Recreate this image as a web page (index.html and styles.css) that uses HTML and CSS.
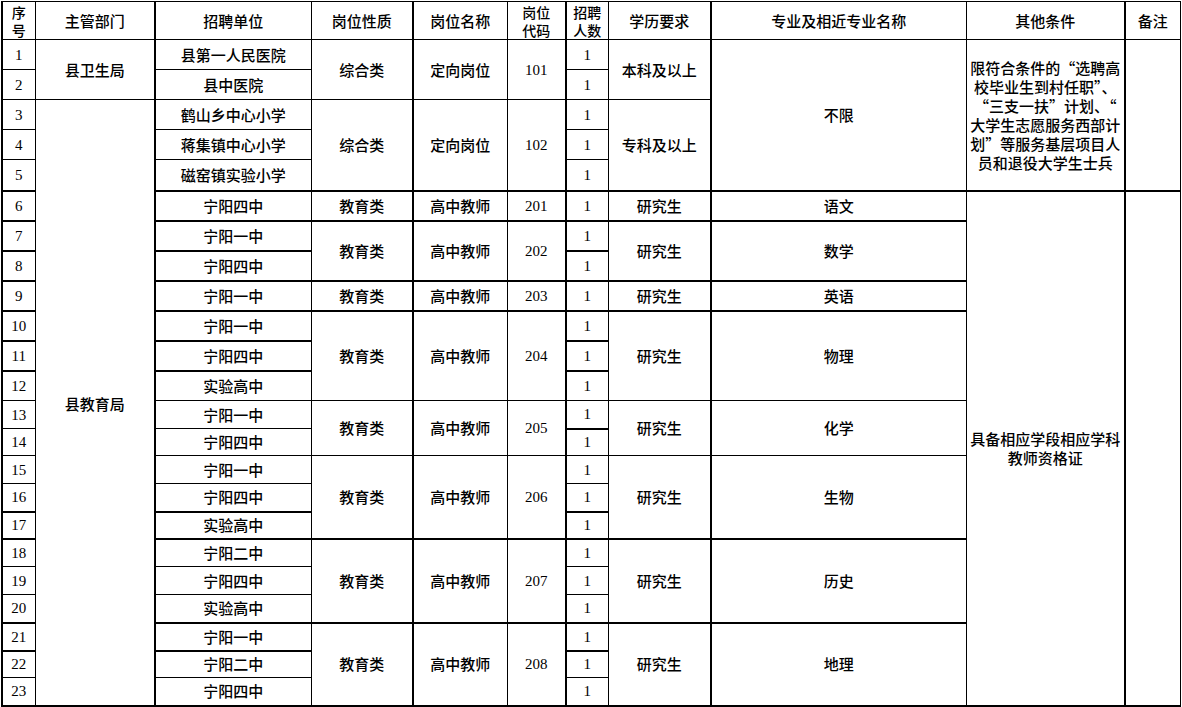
FILE: index.html
```html
<!DOCTYPE html>
<html lang="zh">
<head>
<meta charset="utf-8">
<title>招聘岗位一览表</title>
<link rel="stylesheet" href="styles.css">
</head>
<body>
<table class="jobs">
<colgroup>
<col class="c1"><col class="c2"><col class="c3 tl"><col class="c4"><col class="c5 tl"><col class="c6"><col class="c7 tl"><col class="c8"><col class="c9 tl"><col class="c10"><col class="c11 tl">
</colgroup>
<thead>
<tr class="r38">
<th class="two">序<br>号</th><th>主管部门</th><th>招聘单位</th><th>岗位性质</th><th>岗位名称</th><th class="two">岗位<br>代码</th><th class="two">招聘<br>人数</th><th>学历要求</th><th>专业及相近专业名称</th><th>其他条件</th><th>备注</th>
</tr>
</thead>
<tbody>
<tr class="r30">
<td class="num">1</td><td rowspan="2">县卫生局</td><td>县第一人民医院</td><td rowspan="2">综合类</td><td rowspan="2">定向岗位</td><td rowspan="2" class="num">101</td><td class="num">1</td><td rowspan="2">本科及以上</td><td rowspan="5">不限</td><td rowspan="5" class="cond">限符合条件的“选聘高<br>校毕业生到村任职”、<br>“三支一扶”计划、“<br>大学生志愿服务西部计<br>划”等服务基层项目人<br>员和退役大学生士兵</td><td rowspan="5"></td>
</tr>
<tr class="r30">
<td class="num">2</td><td>县中医院</td><td class="num">1</td>
</tr>
<tr class="r30">
<td class="num">3</td><td rowspan="21" class="dept">县教育局</td><td>鹤山乡中心小学</td><td rowspan="3">综合类</td><td rowspan="3">定向岗位</td><td rowspan="3" class="num">102</td><td class="num">1</td><td rowspan="3">专科及以上</td>
</tr>
<tr class="r30">
<td class="num">4</td><td>蒋集镇中心小学</td><td class="num">1</td>
</tr>
<tr class="r31">
<td class="num">5</td><td>磁窑镇实验小学</td><td class="num">1</td>
</tr>
<tr class="r30 tk">
<td class="num">6</td><td>宁阳四中</td><td>教育类</td><td>高中教师</td><td class="num">201</td><td class="num">1</td><td>研究生</td><td>语文</td><td rowspan="18" class="cert">具备相应学段相应学科<br>教师资格证</td><td rowspan="18"></td>
</tr>
<tr class="r30 tk">
<td class="num">7</td><td>宁阳一中</td><td rowspan="2">教育类</td><td rowspan="2">高中教师</td><td rowspan="2" class="num">202</td><td class="num">1</td><td rowspan="2">研究生</td><td rowspan="2">数学</td>
</tr>
<tr class="r30 tk">
<td class="num">8</td><td>宁阳四中</td><td class="num">1</td>
</tr>
<tr class="r30 tk">
<td class="num">9</td><td>宁阳一中</td><td>教育类</td><td>高中教师</td><td class="num">203</td><td class="num">1</td><td>研究生</td><td>英语</td>
</tr>
<tr class="r30 tk">
<td class="num">10</td><td>宁阳一中</td><td rowspan="3">教育类</td><td rowspan="3">高中教师</td><td rowspan="3" class="num">204</td><td class="num">1</td><td rowspan="3">研究生</td><td rowspan="3">物理</td>
</tr>
<tr class="r30 tk">
<td class="num">11</td><td>宁阳四中</td><td class="num">1</td>
</tr>
<tr class="r30 tk">
<td class="num">12</td><td>实验高中</td><td class="num">1</td>
</tr>
<tr class="r28">
<td class="num">13</td><td>宁阳一中</td><td rowspan="2">教育类</td><td rowspan="2">高中教师</td><td rowspan="2" class="num">205</td><td class="num">1</td><td rowspan="2">研究生</td><td rowspan="2">化学</td>
</tr>
<tr class="r27">
<td class="num">14</td><td>宁阳四中</td><td class="num tt">1</td>
</tr>
<tr class="r28">
<td class="num">15</td><td>宁阳一中</td><td rowspan="3">教育类</td><td rowspan="3">高中教师</td><td rowspan="3" class="num">206</td><td class="num">1</td><td rowspan="3">研究生</td><td rowspan="3">生物</td>
</tr>
<tr class="r28">
<td class="num">16</td><td>宁阳四中</td><td class="num">1</td>
</tr>
<tr class="r27 tk">
<td class="num">17</td><td>实验高中</td><td class="num">1</td>
</tr>
<tr class="r28 tk">
<td class="num">18</td><td>宁阳二中</td><td rowspan="3">教育类</td><td rowspan="3">高中教师</td><td rowspan="3" class="num">207</td><td class="num">1</td><td rowspan="3">研究生</td><td rowspan="3">历史</td>
</tr>
<tr class="r28">
<td class="num">19</td><td>宁阳四中</td><td class="num">1</td>
</tr>
<tr class="r28">
<td class="num">20</td><td>实验高中</td><td class="num">1</td>
</tr>
<tr class="r28 tk">
<td class="num">21</td><td>宁阳一中</td><td rowspan="3">教育类</td><td rowspan="3">高中教师</td><td rowspan="3" class="num">208</td><td class="num">1</td><td rowspan="3">研究生</td><td rowspan="3">地理</td>
</tr>
<tr class="r27 tk">
<td class="num">22</td><td>宁阳二中</td><td class="num">1</td>
</tr>
<tr class="r28">
<td class="num">23</td><td>宁阳四中</td><td class="num">1</td>
</tr>
</tbody>
</table>
</body>
</html>
```

FILE: styles.css
```css
html, body {
  margin: 0;
  padding: 0;
  background: #fff;
}

body {
  padding: 1px 0 0 1px;
}

.jobs {
  border-collapse: collapse;
  table-layout: fixed;
  width: 1179px;
  font-family: "Noto Sans CJK SC", "Liberation Serif", sans-serif;
  font-size: 15px;
  color: #000;
  border: 2px solid #000;
  border-top-width: 1px;
  border-right-width: 1px;
}

.c1 { width: 33px; }
.c2 { width: 120px; }
.c3 { width: 156px; }
.c4 { width: 102px; }
.c5 { width: 94px; }
.c6 { width: 59px; }
.c7 { width: 42px; }
.c8 { width: 103px; }
.c9 { width: 255px; }
.c10 { width: 159px; }
.c11 { width: 55px; }

.tl { border-left: 2px solid #000; }

.jobs th,
.jobs td {
  border: 1px solid #000;
  padding: 0 2px;
  text-align: center;
  vertical-align: middle;
  line-height: 18px;
  font-weight: 500;
  white-space: nowrap;
  overflow: hidden;
}

.jobs th.two {
  font-size: 14px;
  line-height: 18px;
  padding: 0;
}

.r38 { height: 38px; }
.r31 { height: 31px; }
.r30 { height: 30px; }
.r28 { height: 28px; }
.r27 { height: 27px; }

.jobs tr.tk > td,
.jobs td.tt {
  border-top: 2px solid #000;
}

.jobs td.num {
  font-family: "Liberation Serif", "Noto Sans CJK SC", serif;
  font-size: 15px;
}

.jobs td.cond,
.jobs td.cert {
  line-height: 19px;
  padding: 0 3px;
}

.jobs td.dept {
  padding-top: 4px;
}
```
